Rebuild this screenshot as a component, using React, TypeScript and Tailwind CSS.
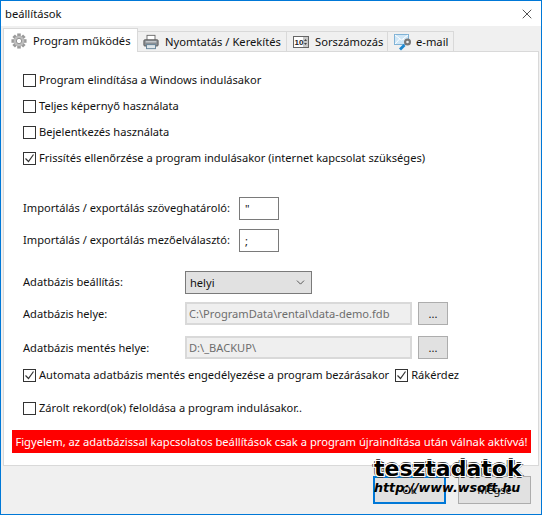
import { ReactNode } from 'react';
import { ChevronDown, X } from 'lucide-react';

const font = { fontFamily: '"Noto Sans", Tahoma, sans-serif' };

const Gear = () => (
  <svg width="16" height="16" viewBox="0 0 18 18" className="block">
    <g fill="#9a9a9a">
      {[0, 45, 90, 135].map((a) => (
        <rect key={a} x="7" y="0.5" width="4" height="17" transform={`rotate(${a} 9 9)`} />
      ))}
    </g>
    <circle cx="9" cy="9" r="6" fill="#bdbdbd" />
    <circle cx="9" cy="9" r="3" fill="#fff" stroke="#8a8a8a" />
  </svg>
);

const Printer = () => (
  <svg width="16" height="16" viewBox="0 0 18 18" className="block">
    <rect x="4.5" y="1.5" width="9" height="6" fill="#fff" stroke="#666" />
    <rect x="1" y="6.5" width="16" height="7" rx="1" fill="#8a8f94" stroke="#555" />
    <rect x="3" y="8" width="12" height="1.5" fill="#c9ced2" />
    <rect x="4" y="12" width="10" height="4.5" fill="#dfe6ea" stroke="#5f7f95" />
  </svg>
);

const Counter = () => (
  <svg width="16" height="12" viewBox="0 0 16 12" className="block">
    <rect x="0.5" y="0.5" width="15" height="11" fill="#fff" stroke="#666" />
    <rect x="10" y="1" width="5" height="10" fill="#c8c8c8" />
    <path d="M11 5l1.5-2L14 5zM11 7l1.5 2L14 7z" fill="#444" />
    <text x="1.5" y="9" fontSize="8" fontFamily="Liberation Sans" fontWeight="700" fill="#222">10</text>
  </svg>
);

const Mail = () => (
  <svg width="18" height="18" viewBox="0 0 18 18" className="block">
    <rect x="0.5" y="1.5" width="14" height="10" fill="#cfe6f6" stroke="#7fb2d6" />
    <path d="M1 2l6.5 5L14 2M1 11l4.500-5M14 11l-4.500-5" fill="none" stroke="#fff" />
    <circle cx="13.500" cy="9" r="3.500" fill="#777" />
    <circle cx="13.500" cy="9" r="1.300" fill="#eee" />
    <path d="M5 15.500l4.500-4.500 2 2-4.500 4.500z" fill="#1b87d0" />
  </svg>
);

const Box = ({ checked }: { checked?: boolean }) => (
  <span className="flex h-[13px] w-[13px] shrink-0 items-center justify-center border border-[#333333] bg-white">
    {checked && (
      <svg width="11" height="11" viewBox="0 0 11 11">
        <path d="M1.5 5.500l3 3 5-7" fill="none" stroke="#333" strokeWidth="1.2" />
      </svg>
    )}
  </span>
);

const Check = ({ checked, children, className = '' }: { checked?: boolean; children: ReactNode; className?: string }) => (
  <div className={`flex items-center gap-[3px] whitespace-nowrap ${className}`}>
    <Box checked={checked} />
    <span className="pb-[2px]">{children}</span>
  </div>
);

const Tab = ({ icon, label, active, className = '' }: { icon: ReactNode; label: string; active?: boolean; className?: string }) => (
  <div
    className={`flex items-center whitespace-nowrap border border-[#d9d9d9] text-[11.2px] ${
      active ? 'relative z-10 h-[24px] border-b-0 bg-white' : 'h-[21px] border-l-0 bg-[#f0f0f0]'
    } ${className}`}
  >
    {icon}
    <span>{label}</span>
  </div>
);

const Path = ({ label, value, className = '' }: { label: string; value: string; className?: string }) => (
  <div className={`flex h-[23px] items-center whitespace-nowrap ${className}`}>
    <span className="w-[162px]">{label}</span>
    <div className="flex h-full w-[227px] items-center border-2 border-[#d9d9d9] bg-[#efefef] pl-[2px] text-[#6d6d6d]">{value}</div>
    <div className="ml-[6px] flex h-full w-[30px] items-center justify-center border border-[#adadad] bg-[#e1e1e1]">...</div>
  </div>
);

const Field = ({ label, value, className = '' }: { label: string; value: string; className?: string }) => (
  <div className={`flex h-[23px] items-center whitespace-nowrap ${className}`}>
    <span className="w-[216px] pb-[2px]">{label}</span>
    <div className="flex h-full w-[40px] items-center border border-[#7a7a7a] bg-white pl-[5px]">{value}</div>
  </div>
);

export default function App() {
  return (
    <div style={font} className="relative flex h-[515px] w-[542px] flex-col overflow-hidden border border-[#0078d7] bg-[#f0f0f0] text-[11.1px] leading-none text-[#111111]">
      <div className="flex h-[25px] shrink-0 items-center justify-between bg-white pl-[4px] pr-[6px] text-[11.2px]">
        <span>beállítások</span>
        <X size={16} strokeWidth={1.1} color="#111" />
      </div>

      <div className="flex h-[26px] shrink-0 items-end pl-[2px]">
        <Tab active icon={<span className="ml-[7px] mr-[6px]"><Gear /></span>} label="Program működés" className="w-[135px]" />
        <Tab icon={<span className="ml-[5px] mr-[6px]"><Printer /></span>} label="Nyomtatás / Kerekítés" className="w-[149px]" />
        <Tab icon={<span className="ml-[6px] mr-[6px]"><Counter /></span>} label="Sorszámozás" className="w-[101px]" />
        <Tab icon={<span className="ml-[6px] mr-[4px]"><Mail /></span>} label="e-mail" className="w-[66px]" />
      </div>

      <div className="relative -mt-px ml-[2px] h-[415px] w-[536px] shrink-0 border border-[#d9d9d9] bg-white pl-[19px] pr-[7px] pt-[22px]">
        <Check className="h-[13px]">Program elindítása a Windows indulásakor</Check>
        <Check className="mt-[13px] h-[13px]">Teljes képernyő használata</Check>
        <Check className="mt-[13px] h-[13px]">Bejelentkezés használata</Check>
        <Check checked className="mt-[13px] h-[13px]">Frissítés ellenőrzése a program indulásakor (internet kapcsolat szükséges)</Check>

        <Field label="Importálás / exportálás szöveghatároló:" value={'"'} className="mt-[32px]" />
        <Field label="Importálás / exportálás mezőelválasztó:" value=";" className="mt-[9px]" />

        <div className="mt-[19px] flex h-[23px] items-center">
          <span className="w-[162px] pb-[2px]">Adatbázis beállítás:</span>
          <div className="flex h-full w-[127px] items-center justify-between border border-[#7a7a7a] bg-[#e1e1e1] pl-[4px] pr-[4px]">
            <span>helyi</span>
            <ChevronDown size={13} strokeWidth={1.6} color="#444" />
          </div>
        </div>

        <Path label="Adatbázis helye:" value="C:\ProgramData\rental\data-demo.fdb" className="mt-[8px]" />
        <Path label="Adatbázis mentés helye:" value="D:\_BACKUP\" className="mt-[11px]" />

        <div className="mt-[10px] flex h-[13px] items-center">
          <Check checked>Automata adatbázis mentés engedélyezése a program bezárásakor</Check>
          <Check checked className="ml-auto mr-[72px]">Rákérdez</Check>
        </div>

        <Check className="mt-[20px] h-[13px]">Zárolt rekord(ok) feloldása a program indulásakor..</Check>

        <div className="mt-[15px] flex h-[23px] w-[519px] -translate-x-[11px] items-center justify-center whitespace-nowrap bg-[#ff0000] text-[11.2px] text-white">
          Figyelem, az adatbázissal kapcsolatos beállítások csak a program újraindítása után válnak aktívvá!
        </div>
      </div>

      <div className="mr-[10px] mt-[10px] flex justify-end gap-[12px]">
        <div className="flex h-[28px] w-[73px] items-center justify-center border-2 border-[#0078d7] bg-[#e1e1e1]">Ok</div>
        <div className="flex h-[28px] w-[73px] items-center justify-center border border-[#adadad] bg-[#e1e1e1]">Mégse</div>
      </div>

      <div className="absolute left-[373px] top-[457px] whitespace-nowrap text-[22px] font-bold text-black [font-family:'DejaVu_Sans'] [text-shadow:1px_0_#fff,-1px_0_#fff,0_1px_#fff,0_-1px_#fff,1px_1px_#fff,-1px_-1px_#fff,1px_-1px_#fff,-1px_1px_#fff,2px_0_#444,-2px_0_#444,0_2px_#444,0_-2px_#444]">
        tesztadatok
      </div>
      <div className="absolute left-[373px] top-[481px] whitespace-nowrap text-[12.7px] font-bold italic text-black [font-family:'DejaVu_Sans']">
        http://www.wsoft.hu
      </div>
    </div>
  );
}
